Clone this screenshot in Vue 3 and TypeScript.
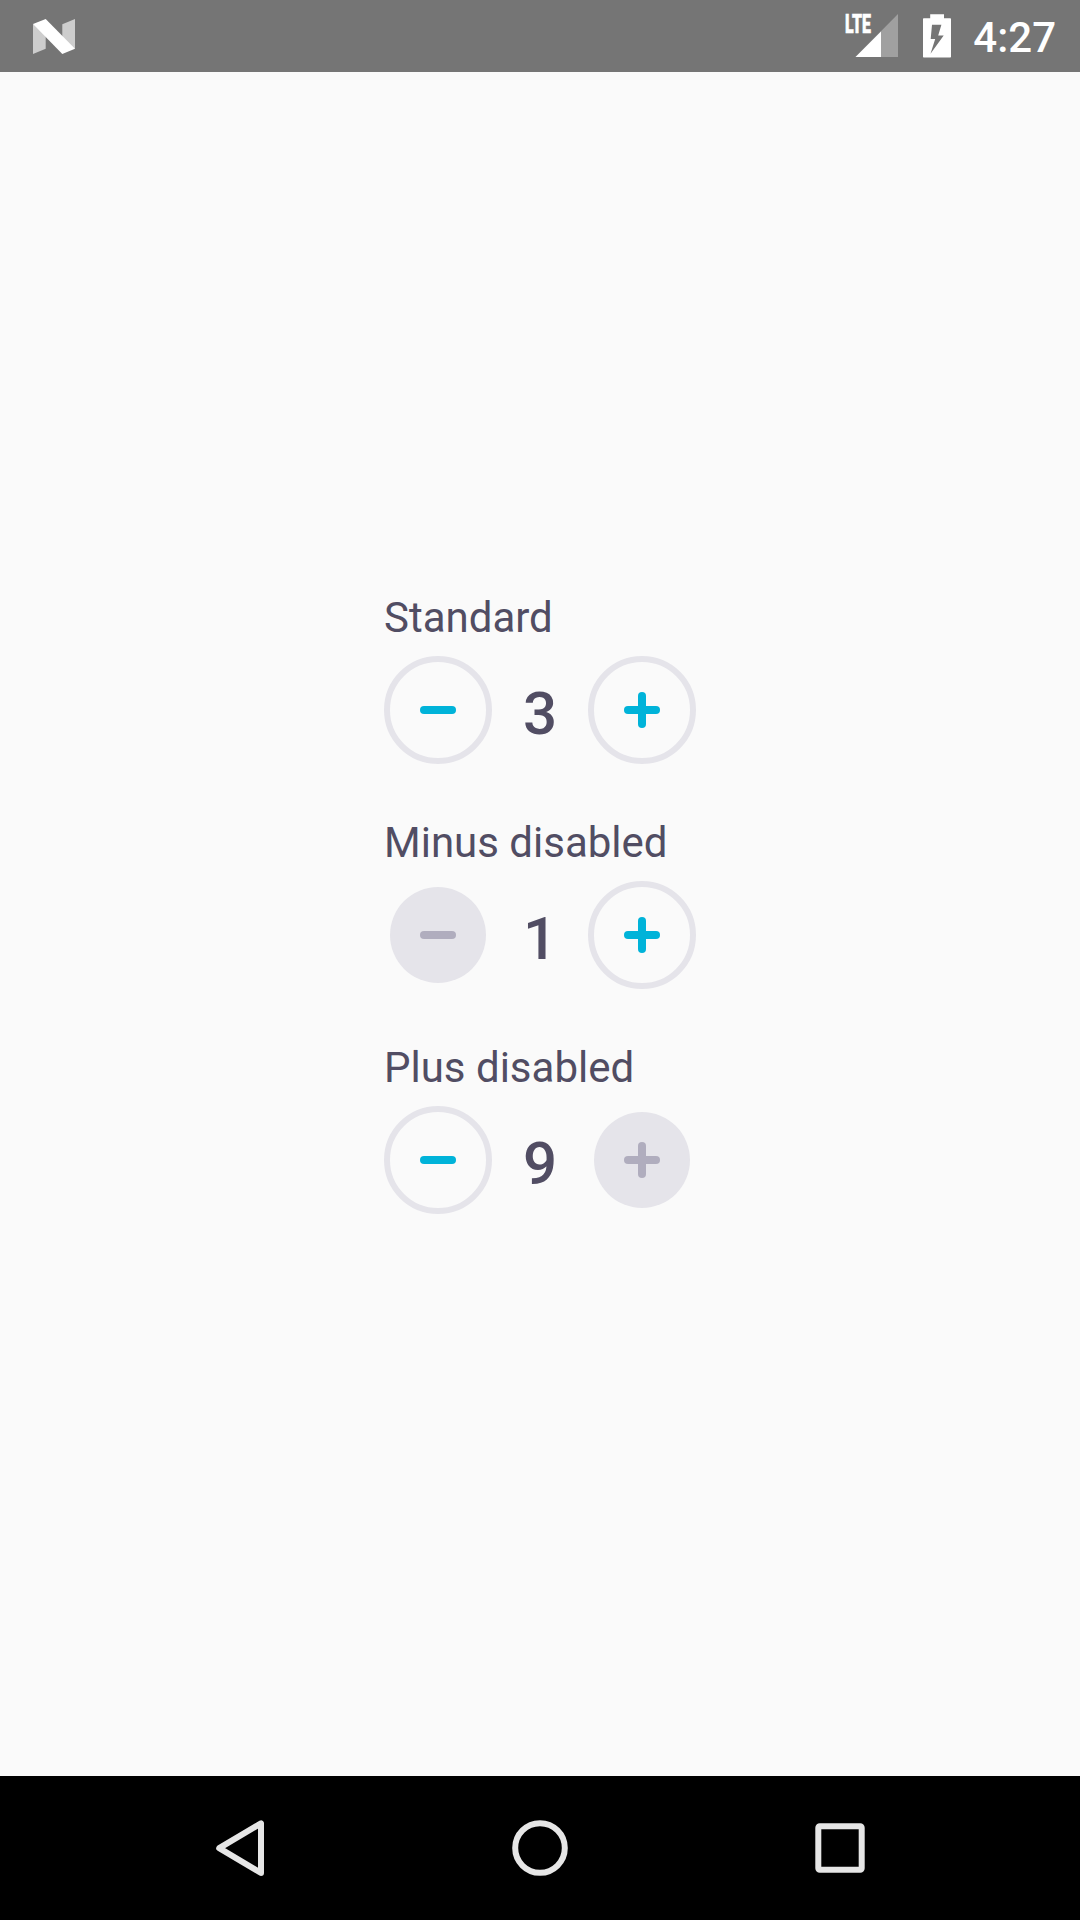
<script setup lang="ts">
import { ref } from 'vue'

interface Stepper {
  label: string
  value: number
  min: number
  max: number
}

const steppers = ref<Stepper[]>([
  { label: 'Standard', value: 3, min: 1, max: 9 },
  { label: 'Minus disabled', value: 1, min: 1, max: 9 },
  { label: 'Plus disabled', value: 9, min: 1, max: 9 },
])
</script>

<template>
  <div class="screen">
    <header class="status-bar">
      <svg class="logo" width="46" height="40" viewBox="0 0 46 40">
        <path d="M3 8V38L15.7 32.7V14Z" fill="#cdcdcd" />
        <path d="M32.3 8.3L45 3V33L32.3 26Z" fill="#cdcdcd" />
        <path d="M3 8L15.7 3L45 32.8L32.3 38Z" fill="#fff" />
      </svg>
      <div class="indicators">
        <svg width="56" height="72" viewBox="0 0 56 72">
          <path d="M53 14V57H10.5Z" fill="#a0a0a0" />
          <path d="M36 31.5V57H10.5Z" fill="#fff" />
          <text class="network" x="0" y="33.3" textLength="26" lengthAdjust="spacingAndGlyphs">LTE</text>
        </svg>
        <svg class="battery" width="28" height="72" viewBox="0 0 28 72">
          <path
            fill="#fff"
            fill-rule="evenodd"
            d="M7.2 14.2H21V18.2H27.3Q28 18.2 28 18.9V56.8Q28 57.5 27.3 57.5H0.7Q0 57.5 0 56.8V18.9Q0 18.2 0.7 18.2H7.2ZM9 24.7L7.7 39H12.2L7.5 53.7L20.7 35.5H15.2L18.4 24.7Z"
          />
        </svg>
        <span class="clock">4:27</span>
      </div>
    </header>

    <main class="content">
      <section v-for="s in steppers" :key="s.label" class="stepper">
        <div class="label">{{ s.label }}</div>
        <div class="controls">
          <button class="round" :disabled="s.value <= s.min" aria-label="Decrease" @click="s.value--">
            <svg width="36" height="36" viewBox="0 0 36 36">
              <rect y="14" width="36" height="8" rx="4" />
            </svg>
          </button>
          <span class="value">{{ s.value }}</span>
          <button class="round" :disabled="s.value >= s.max" aria-label="Increase" @click="s.value++">
            <svg width="36" height="36" viewBox="0 0 36 36">
              <rect y="14" width="36" height="8" rx="4" />
              <rect x="14" width="8" height="36" rx="4" />
            </svg>
          </button>
        </div>
      </section>
    </main>

    <nav class="nav-bar">
      <svg width="60" height="60" viewBox="0 0 60 60">
        <path d="M9.2 30.2L51 5.3V55Z" />
      </svg>
      <svg width="60" height="60" viewBox="0 0 60 60">
        <circle cx="30" cy="30" r="24.8" />
      </svg>
      <svg width="60" height="60" viewBox="0 0 60 60">
        <rect x="8.3" y="8.3" width="43.4" height="43.4" rx="1.5" />
      </svg>
    </nav>
  </div>
</template>

<style>
body {
  margin: 0;
}
</style>

<style scoped>
.screen {
  display: flex;
  flex-direction: column;
  width: 1080px;
  height: 1920px;
  overflow: hidden;
  background: #fafafa;
  font-family: Roboto, sans-serif;
}

.status-bar {
  display: flex;
  flex: none;
  align-items: flex-start;
  justify-content: space-between;
  height: 72px;
  box-sizing: border-box;
  padding: 0 24px 0 30px;
  background: #757575;
}

.logo {
  margin-top: 15.5px;
}

.indicators {
  display: flex;
}

.network {
  fill: #fff;
  stroke: #fff;
  stroke-width: 0.6px;
  font-size: 26px;
  font-weight: 900;
}

.battery {
  margin-left: 22px;
}

.clock {
  margin: 13px 0 0 22px;
  color: #fff;
  font-size: 42px;
  font-weight: 500;
  line-height: 49px;
}

.content {
  display: flex;
  flex: 1;
  flex-direction: column;
  align-items: center;
  gap: 54px;
  box-sizing: border-box;
  padding-top: 521px;
}

.stepper {
  width: 312px;
  color: #514d63;
}

.label {
  height: 63px;
  font-size: 42px;
  line-height: 49px;
  white-space: nowrap;
}

.controls {
  display: flex;
  align-items: center;
  justify-content: space-between;
  height: 108px;
}

.round {
  display: flex;
  align-items: center;
  justify-content: center;
  width: 108px;
  height: 108px;
  box-sizing: border-box;
  padding: 0;
  border: 6px solid #e5e4ea;
  border-radius: 50%;
  background: transparent;
  fill: #00b3d9;
}

.round:disabled {
  width: 96px;
  height: 96px;
  margin: 6px;
  border: 0;
  background: #e5e4ea;
  fill: #b0adbe;
}

.value {
  padding-top: 7px;
  font-size: 60px;
  font-weight: 500;
  line-height: 71px;
}

.nav-bar {
  display: flex;
  flex: none;
  align-items: center;
  justify-content: space-between;
  height: 144px;
  box-sizing: border-box;
  padding: 0 210px;
  background: #000;
}

.nav-bar svg {
  fill: none;
  stroke: #e6e6e6;
  stroke-width: 6px;
  stroke-linejoin: round;
}
</style>
